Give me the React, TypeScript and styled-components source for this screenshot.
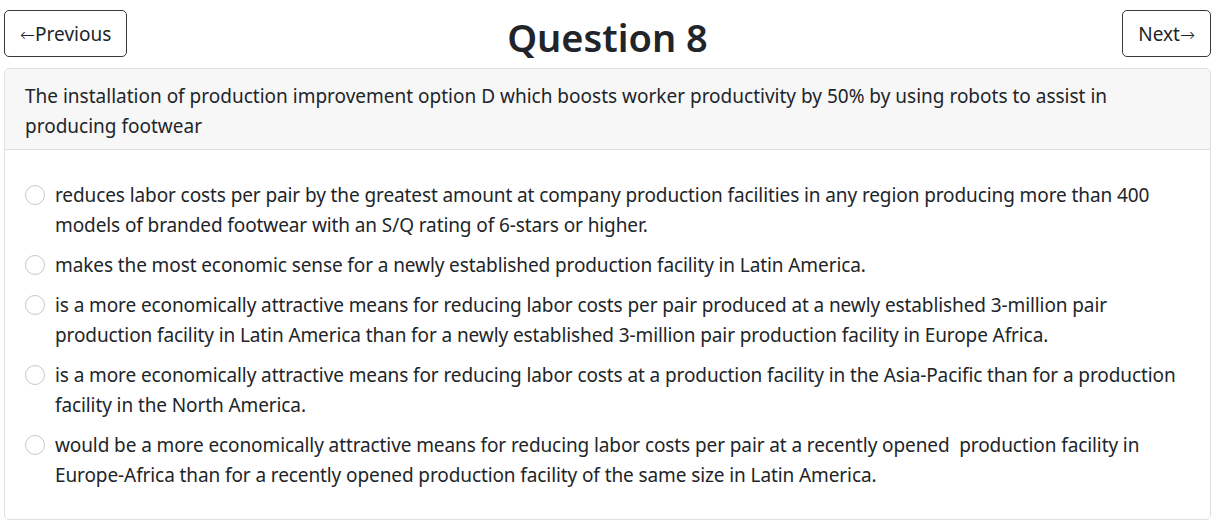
import styled, { createGlobalStyle } from "styled-components";

const GlobalStyle = createGlobalStyle`
  html, body {
    margin: 0;
    padding: 0;
    background: #fff;
  }
  body {
    font-family: "Noto Sans", "Open Sans", sans-serif;
    color: #212529;
  }
`;

const options = [
  "reduces labor costs per pair by the greatest amount at company production facilities in any region producing more than 400 models of branded footwear with an S/Q rating of 6-stars or higher.",
  "makes the most economic sense for a newly established production facility in Latin America.",
  "is a more economically attractive means for reducing labor costs per pair produced at a newly established 3-million pair production facility in Latin America than for a newly established 3-million pair production facility in Europe Africa.",
  "is a more economically attractive means for reducing labor costs at a production facility in the Asia-Pacific than for a production facility in the North America.",
  "would be a more economically attractive means for reducing labor costs per pair at a recently opened\u00a0 production facility in Europe-Africa than for a recently opened production facility of the same size in Latin America.",
];

export default function App() {
  return (
    <>
      <GlobalStyle />
      <Page>
        <TopBar>
          <NavButton>
            <Arrow>←</Arrow>Previous
          </NavButton>
          <Title>Question 8</Title>
          <NavButton $right>
            Next<Arrow>→</Arrow>
          </NavButton>
        </TopBar>

        <Card>
          <CardHeader>
            <HeaderText>
              The installation of production improvement option D which boosts worker
              productivity by 50% by using robots to assist in producing footwear
            </HeaderText>
          </CardHeader>
          <CardBody>
            {options.map((o, i) => (
              <Option key={i}>
                <Radio type="radio" name="q8" />
                <OptionText>{o}</OptionText>
              </Option>
            ))}
          </CardBody>
        </Card>
      </Page>
    </>
  );
}

const Page = styled.div`
  padding: 10px 4px 0;
`;

const TopBar = styled.div`
  display: grid;
  grid-template-columns: 1fr auto 1fr;
  grid-template-rows: 47px;
  align-items: center;
  margin-bottom: 11px;
`;

const NavButton = styled.button<{ $right?: boolean }>`
  justify-self: ${(p) => (p.$right ? "end" : "start")};
  height: 47px;
  padding: 0 15px;
  border: 1px solid #343a40;
  border-radius: 5px;
  background: #fff;
  color: #212529;
  font-family: inherit;
  font-size: 19px;
  cursor: pointer;
`;

const Arrow = styled.span`
  font-family: "DejaVu Sans", sans-serif;
  font-size: 18px;
  font-weight: 300;
`;

const Title = styled.h1`
  align-self: start;
  margin: 8px 0 0;
  font-size: 38px;
  font-weight: 600;
  line-height: 39px;
`;

const Card = styled.div`
  border: 1px solid #dfdfdf;
  border-radius: 5px;
  overflow: hidden;
`;

const CardHeader = styled.div`
  background: #f7f7f7;
  border-bottom: 1px solid #dfdfdf;
  padding: 12px 20px 8px;
  font-size: 19px;
  line-height: 30px;
`;

const HeaderText = styled.div`
  max-width: 1090px;
`;

const CardBody = styled.div`
  padding: 30px 20px 29px;
  display: flex;
  flex-direction: column;
  gap: 10px;
`;

const Option = styled.label`
  display: flex;
  align-items: flex-start;
  gap: 10px;
  font-size: 19px;
  line-height: 30px;
  letter-spacing: -0.1px;
`;

const Radio = styled.input`
  appearance: none;
  flex: none;
  width: 20px;
  height: 20px;
  margin: 5px 0 0;
  border: 1px solid #c4c8cc;
  border-radius: 50%;
  background: #fff;
`;

const OptionText = styled.span`
  flex: 1;
`;
